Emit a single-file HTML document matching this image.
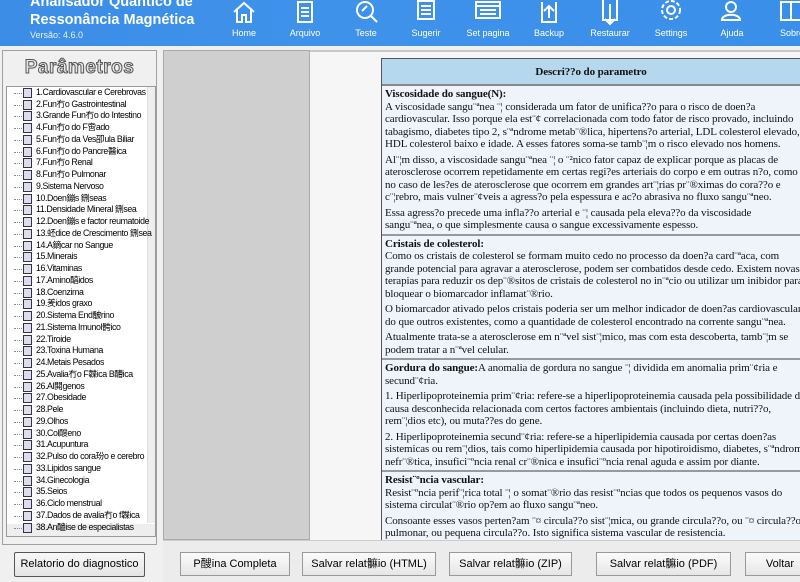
<!DOCTYPE html>
<html><head><meta charset="utf-8"><style>
*{margin:0;padding:0;box-sizing:border-box}
html,body{width:800px;height:582px;overflow:hidden}
body{background:#f0f0f0;font-family:"Liberation Sans","Noto Sans CJK SC",sans-serif;position:relative}
#hdr{position:absolute;left:0;top:0;width:800px;height:46px;background:linear-gradient(90deg,#3b8de6,#3f92ea 40%,#3a8fe9);}
#t1{position:absolute;left:30px;top:-7px;color:#fff;font-size:14.5px;line-height:18px;font-weight:bold;}
#ver{position:absolute;left:30px;top:30px;color:#e8f0ff;font-size:9px}
.nav{position:absolute;top:0;width:60px;text-align:center;color:#fff;font-size:9px}
.nav svg{display:block;margin:0 auto;height:26px;width:30px}
.nav span{display:block;margin-top:2px}
#left{position:absolute;left:2px;top:50px;width:155px;height:495px;border:1px solid #a0a0a0;background:#f0f0f0}
#ptitle{position:absolute;left:0;top:6px;width:153px;text-align:center;font-size:19px;font-weight:bold;color:#e8e8e8;-webkit-text-stroke:1px #555;letter-spacing:0.5px}
#tree{position:absolute;left:3px;top:35px;width:150px;height:451px;background:#fff;border:1px solid #999;overflow:hidden}
.it{position:absolute;left:29px;font-size:8.8px;letter-spacing:-0.4px;white-space:nowrap;color:#000;line-height:11px}
.ic{position:absolute;left:16px;width:9px;height:10px;border:1px solid #334;background:#dde}
.ln{position:absolute;left:7px;width:10px;border-top:1px dotted #888}
#vs{position:absolute;left:140px;top:0;width:10px;height:436px;background:#eee;border-left:1px solid #ddd}
#hs{position:absolute;left:0;top:437px;width:150px;height:13px;background:#eee}
#rbtn{position:absolute;left:14px;top:552px;width:131px;height:25px;border:1px solid #555;border-radius:2px;background:linear-gradient(#f8f8f8,#e4e4e4);font-size:11px;text-align:center;line-height:23px}
#mid{position:absolute;left:163px;top:50px;width:147px;height:490px;background:#cfcfcf;border:1px solid #aaa}
#ct{position:absolute;left:310px;top:50px;width:490px;height:490px;background:#f6f6f6;border-top:2px solid #c8c8c8;overflow:hidden}
#tbl{position:absolute;left:71px;top:6px;width:450px;height:482px;overflow:hidden;border-left:1px solid #555;border-top:1px solid #555;background:#eef4fa;font-family:"Liberation Serif",serif;font-size:11px;letter-spacing:-0.1px;color:#111}
#th{height:27px;width:430px;background:#b6d8ee;border-bottom:2px solid #888;text-align:center;font-weight:bold;line-height:27px;font-size:11px;padding-right:12px}
#thx{position:absolute;left:430px;top:0;width:20px;height:27px;background:#b6d8ee;border-bottom:2px solid #888}
#bd{line-height:12.5px}
.sec{padding:2px 6px 2px 3px;border-bottom:2px solid #999}
.sec p{margin-bottom:3px}
.sec p:last-child{margin-bottom:0}
#bot{position:absolute;left:163px;top:540px;width:637px;height:42px;background:#ececec;border-top:1px solid #ccc;overflow:hidden}
.b{position:absolute;top:11px;height:24px;border:1px solid #999;background:linear-gradient(#fbfbfb,#e6e6e6);font-size:11px;text-align:center;line-height:22px}
</style></head><body>
<div id="hdr">
<div id="t1">Analisador Quântico de<br>Ressonância Magnética</div>
<div id="ver">Versão: 4.6.0</div>
<div class="nav" style="left:214px"><svg viewBox="0 0 30 26" fill="none" stroke="#fff" stroke-width="2"><path d="M5 12 L15 3 L25 12 M8 10 V22 H13 V15 H17 V22 H22 V10"/></svg><span>Home</span></div>
<div class="nav" style="left:275px"><svg viewBox="0 0 30 26" fill="none" stroke="#fff" stroke-width="2"><rect x="8" y="2" width="14" height="20"/><path d="M11 8H19M11 12H19M11 16H19"/></svg><span>Arquivo</span></div>
<div class="nav" style="left:336px"><svg viewBox="0 0 30 26" fill="none" stroke="#fff" stroke-width="2"><circle cx="14" cy="10" r="8"/><path d="M20 16L26 22M11 11L16 6"/></svg><span>Teste</span></div>
<div class="nav" style="left:396px"><svg viewBox="0 0 30 26" fill="none" stroke="#fff" stroke-width="2"><rect x="7" y="1" width="16" height="18"/><path d="M10 6H20M10 10H20M10 14H20"/></svg><span>Sugerir</span></div>
<div class="nav" style="left:458px"><svg viewBox="0 0 30 26" fill="none" stroke="#fff" stroke-width="2"><rect x="3" y="2" width="24" height="16"/><path d="M3 6H27M7 10H23M7 14H23"/></svg><span>Set pagina</span></div>
<div class="nav" style="left:519px"><svg viewBox="0 0 30 26" fill="none" stroke="#fff" stroke-width="2"><path d="M8 2V22H22V2M15 18V6M10 11L15 6L20 11"/></svg><span>Backup</span></div>
<div class="nav" style="left:580px"><svg viewBox="0 0 30 26" fill="none" stroke="#fff" stroke-width="2"><path d="M8 0V20H22V0M15 4V24M10 19L15 24L20 19"/></svg><span>Restaurar</span></div>
<div class="nav" style="left:641px"><svg viewBox="0 0 30 26" fill="none" stroke="#fff" stroke-width="2"><circle cx="15" cy="10" r="4"/><circle cx="15" cy="10" r="9" stroke-dasharray="4 2"/></svg><span>Settings</span></div>
<div class="nav" style="left:702px"><svg viewBox="0 0 30 26" fill="none" stroke="#fff" stroke-width="2"><circle cx="14" cy="7" r="5"/><path d="M5 20C5 13 23 13 23 20Z"/></svg><span>Ajuda</span></div>
<div class="nav" style="left:762px"><svg viewBox="0 0 30 26" fill="none" stroke="#fff" stroke-width="2"><path d="M4 2H14V20H4ZM14 2H26V20H14"/></svg><span>Sobre</span></div>
</div>

<div id="left">
<div id="ptitle">Parâmetros</div>
<div id="tree">
<div id="vs"></div><div id="hs"></div>
<div style="position:absolute;left:0;top:0;">
<div class="ln" style="top:6px"></div><div class="ic" style="top:1px"></div><div class="it" style="top:0px">1.Cardiovascular e Cerebrovas</div>
<div class="ln" style="top:18px"></div><div class="ic" style="top:13px"></div><div class="it" style="top:12px">2.Fun冇o Gastrointestinal</div>
<div class="ln" style="top:29px"></div><div class="ic" style="top:24px"></div><div class="it" style="top:23px">3.Grande Fun冇o do Intestino</div>
<div class="ln" style="top:41px"></div><div class="ic" style="top:36px"></div><div class="it" style="top:35px">4.Fun冇o do F啻ado</div>
<div class="ln" style="top:53px"></div><div class="ic" style="top:48px"></div><div class="it" style="top:47px">5.Fun冇o da Ves卲ula Biliar</div>
<div class="ln" style="top:65px"></div><div class="ic" style="top:60px"></div><div class="it" style="top:59px">6.Fun冇o do Pancre醫ica</div>
<div class="ln" style="top:76px"></div><div class="ic" style="top:71px"></div><div class="it" style="top:70px">7.Fun冇o Renal</div>
<div class="ln" style="top:88px"></div><div class="ic" style="top:83px"></div><div class="it" style="top:82px">8.Fun冇o Pulmonar</div>
<div class="ln" style="top:100px"></div><div class="ic" style="top:95px"></div><div class="it" style="top:94px">9.Sistema Nervoso</div>
<div class="ln" style="top:112px"></div><div class="ic" style="top:107px"></div><div class="it" style="top:106px">10.Doen鏰s 鉶seas</div>
<div class="ln" style="top:123px"></div><div class="ic" style="top:118px"></div><div class="it" style="top:117px">11.Densidade Mineral 鉶sea</div>
<div class="ln" style="top:135px"></div><div class="ic" style="top:130px"></div><div class="it" style="top:129px">12.Doen鏰s e factor reumatoide</div>
<div class="ln" style="top:147px"></div><div class="ic" style="top:142px"></div><div class="it" style="top:141px">13.蚽dice de Crescimento 鉶sea</div>
<div class="ln" style="top:159px"></div><div class="ic" style="top:154px"></div><div class="it" style="top:153px">14.A鏑car no Sangue</div>
<div class="ln" style="top:170px"></div><div class="ic" style="top:165px"></div><div class="it" style="top:164px">15.Minerais</div>
<div class="ln" style="top:182px"></div><div class="ic" style="top:177px"></div><div class="it" style="top:176px">16.Vitaminas</div>
<div class="ln" style="top:194px"></div><div class="ic" style="top:189px"></div><div class="it" style="top:188px">17.Amino醕idos</div>
<div class="ln" style="top:206px"></div><div class="ic" style="top:201px"></div><div class="it" style="top:200px">18.Coenzima</div>
<div class="ln" style="top:217px"></div><div class="ic" style="top:212px"></div><div class="it" style="top:211px">19.羑idos graxo</div>
<div class="ln" style="top:229px"></div><div class="ic" style="top:224px"></div><div class="it" style="top:223px">20.Sistema End骳rino</div>
<div class="ln" style="top:241px"></div><div class="ic" style="top:236px"></div><div class="it" style="top:235px">21.Sistema Imunol骻ico</div>
<div class="ln" style="top:253px"></div><div class="ic" style="top:248px"></div><div class="it" style="top:247px">22.Tiroide</div>
<div class="ln" style="top:264px"></div><div class="ic" style="top:259px"></div><div class="it" style="top:258px">23.Toxina Humana</div>
<div class="ln" style="top:276px"></div><div class="ic" style="top:271px"></div><div class="it" style="top:270px">24.Metais Pesados</div>
<div class="ln" style="top:288px"></div><div class="ic" style="top:283px"></div><div class="it" style="top:282px">25.Avalia冇o F韘ica B醩ica</div>
<div class="ln" style="top:300px"></div><div class="ic" style="top:295px"></div><div class="it" style="top:294px">26.Al閞genos</div>
<div class="ln" style="top:311px"></div><div class="ic" style="top:306px"></div><div class="it" style="top:305px">27.Obesidade</div>
<div class="ln" style="top:323px"></div><div class="ic" style="top:318px"></div><div class="it" style="top:317px">28.Pele</div>
<div class="ln" style="top:335px"></div><div class="ic" style="top:330px"></div><div class="it" style="top:329px">29.Olhos</div>
<div class="ln" style="top:347px"></div><div class="ic" style="top:342px"></div><div class="it" style="top:341px">30.Col醙eno</div>
<div class="ln" style="top:358px"></div><div class="ic" style="top:353px"></div><div class="it" style="top:352px">31.Acupuntura</div>
<div class="ln" style="top:370px"></div><div class="ic" style="top:365px"></div><div class="it" style="top:364px">32.Pulso do cora玢o e cerebro</div>
<div class="ln" style="top:382px"></div><div class="ic" style="top:377px"></div><div class="it" style="top:376px">33.Lipidos sangue</div>
<div class="ln" style="top:394px"></div><div class="ic" style="top:389px"></div><div class="it" style="top:388px">34.Ginecologia</div>
<div class="ln" style="top:405px"></div><div class="ic" style="top:400px"></div><div class="it" style="top:399px">35.Seios</div>
<div class="ln" style="top:417px"></div><div class="ic" style="top:412px"></div><div class="it" style="top:411px">36.Ciclo menstrual</div>
<div class="ln" style="top:429px"></div><div class="ic" style="top:424px"></div><div class="it" style="top:423px">37.Dados de avalia冇o f韘ica</div>
<div class="ln" style="top:441px"></div><div class="ic" style="top:436px"></div><div class="it" style="top:435px">38.An醠ise de especialistas</div>
</div>
</div>
</div>
<div id="rbtn">Relatorio do diagnostico</div>

<div id="mid"></div>
<div id="ct"><div id="tbl">
<div id="thx"></div>
<div id="th">Descri??o do parametro</div>
<div id="bd">
<div class="sec"><p><b>Viscosidade do sangue(N):</b><br>A viscosidade sangu¨ªnea ¨¦ considerada um fator de unifica??o para o risco de doen?a<br>cardiovascular. Isso porque ela est¨¢ correlacionada com todo fator de risco provado, incluindo<br>tabagismo, diabetes tipo 2, s¨ªndrome metab¨®lica, hipertens?o arterial, LDL colesterol elevado,<br>HDL colesterol baixo e idade. A esses fatores soma-se tamb¨¦m o risco elevado nos homens.</p><p>Al¨¦m disso, a viscosidade sangu¨ªnea ¨¦ o ¨²nico fator capaz de explicar porque as placas de<br>aterosclerose ocorrem repetidamente em certas regi?es arteriais do corpo e em outras n?o, como<br>no caso de les?es de aterosclerose que ocorrem em grandes art¨¦rias pr¨®ximas do cora??o e<br>c¨¦rebro, mais vulner¨¢veis a agress?o pela espessura e ac?o abrasiva no fluxo sangu¨ªneo.</p><p>Essa agress?o precede uma infla??o arterial e ¨¦ causada pela eleva??o da viscosidade<br>sangu¨ªnea, o que simplesmente causa o sangue excessivamente espesso.</p></div>
<div class="sec"><p><b>Cristais de colesterol:</b><br>Como os cristais de colesterol se formam muito cedo no processo da doen?a card¨ªaca, com<br>grande potencial para agravar a aterosclerose, podem ser combatidos desde cedo. Existem novas<br>terapias para reduzir os dep¨®sitos de cristais de colesterol no in¨ªcio ou utilizar um inibidor para<br>bloquear o biomarcador inflamat¨®rio.</p><p>O biomarcador ativado pelos cristais poderia ser um melhor indicador de doen?as cardiovasculares<br>do que outros existentes, como a quantidade de colesterol encontrado na corrente sangu¨ªnea.</p><p>Atualmente trata-se a aterosclerose em n¨ªvel sist¨¦mico, mas com esta descoberta, tamb¨¦m se<br>podem tratar a n¨ªvel celular.</p></div>
<div class="sec"><p><b>Gordura do sangue:</b>A anomalia de gordura no sangue ¨¦ dividida em anomalia prim¨¢ria e<br>secund¨¢ria.</p><p>1. Hiperlipoproteinemia prim¨¢ria: refere-se a hiperlipoproteinemia causada pela possibilidade de<br>causa desconhecida relacionada com certos factores ambientais (incluindo dieta, nutri??o,<br>rem¨¦dios etc), ou muta??es do gene.</p><p>2. Hiperlipoproteinemia secund¨¢ria: refere-se a hiperlipidemia causada por certas doen?as<br>sistemicas ou rem¨¦dios, tais como hiperlipidemia causada por hipotiroidismo, diabetes, s¨ªndrome<br>nefr¨®tica, insufici¨ºncia renal cr¨®nica e insufici¨ºncia renal aguda e assim por diante.</p></div>
<div class="sec" style="border:0"><p><b>Resist¨ºncia vascular:</b><br>Resist¨ºncia perif¨¦rica total ¨¦ o somat¨®rio das resist¨ºncias que todos os pequenos vasos do<br>sistema circulat¨®rio op?em ao fluxo sangu¨ªneo.</p><p>Consoante esses vasos perten?am ¨¤ circula??o sist¨¦mica, ou grande circula??o, ou ¨¤ circula??o<br>pulmonar, ou pequena circula??o. Isto significa sistema vascular de resistencia.</p></div>
</div>
</div></div>

<div id="bot">
<div class="b" style="left:17px;width:110px">P醙ina Completa</div>
<div class="b" style="left:139px;width:134px">Salvar relat髍io (HTML)</div>
<div class="b" style="left:286px;width:123px">Salvar relat髍io (ZIP)</div>
<div class="b" style="left:433px;width:135px">Salvar relat髍io (PDF)</div>
<div class="b" style="left:582px;width:70px">Voltar</div>
</div>
</body></html>
